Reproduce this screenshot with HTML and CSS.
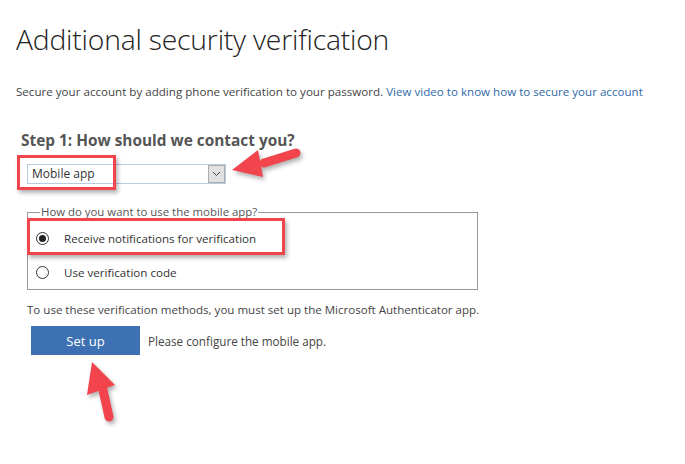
FILE: index.html
```html
<!DOCTYPE html>
<html lang="en">
<head>
    <meta charset="UTF-8">
    <meta name="viewport" content="width=device-width, initial-scale=1.0">
    <title>Additional security verification</title>
    <link rel="stylesheet" href="styles.css">
</head>
<body>
    <div class="page">
        <h1>Additional security verification</h1>
        <p class="intro">Secure your account by adding phone verification to your password. <a href="#">View video to know how to secure your account</a></p>

        <div class="step">
            <h2>Step 1: How should we contact you?</h2>
            <div class="select">
                <span class="select-value">Mobile app</span>
                <span class="select-btn">
                    <svg width="9" height="6" viewBox="0 0 9 6"><path d="M1 1 L4.5 4.5 L8 1" fill="none" stroke="#444" stroke-width="1"/></svg>
                </span>
            </div>

            <fieldset class="options">
                <legend>How do you want to use the mobile app?</legend>
                <label class="option">
                    <span class="radio checked"></span>
                    Receive notifications for verification
                </label>
                <label class="option">
                    <span class="radio"></span>
                    Use verification code
                </label>
            </fieldset>

            <p class="note">To use these verification methods, you must set up the Microsoft Authenticator app.</p>
            <div class="setup-row">
                <button class="btn">Set up</button>
                <span>Please configure the mobile app.</span>
            </div>
        </div>

        <!-- annotations -->
        <div class="mark mark-select"></div>
        <div class="mark mark-option"></div>
        <svg class="arrow arrow-select" width="90" height="50" viewBox="0 0 90 50">
            <path d="M66 11 L34 21" stroke="#f2444d" stroke-width="9" stroke-linecap="round" fill="none"/>
            <path d="M2 28 L28 8 L33 35 Z" fill="#f2444d"/>
        </svg>
        <svg class="arrow arrow-setup" width="50" height="80" viewBox="0 0 50 80">
            <path d="M23 30 L29 57" stroke="#f2444d" stroke-width="9" stroke-linecap="round" fill="none"/>
            <path d="M12 2 L7 35 L35 25 Z" fill="#f2444d"/>
        </svg>
    </div>
</body>
</html>
```

FILE: styles.css
```css
* {
    margin: 0;
    padding: 0;
    box-sizing: border-box;
}

body {
    font-family: 'Open Sans', 'Noto Sans', sans-serif;
    background: #fff;
    color: #444;
}

.page {
    position: relative;
    width: 685px;
    height: 464px;
    padding: 20px 0 0 16px;
}

h1 {
    font-size: 28.3px;
    font-weight: 300;
    color: #222;
    letter-spacing: -0.2px;
    line-height: 38px;
}

.intro {
    margin-top: 25px;
    font-size: 11.6px;
    line-height: 18px;
    color: #444;
}

.intro a {
    color: #2f6aa8;
    text-decoration: none;
}

.step {
    margin-top: 30px;
    padding-left: 11px;
}

h2 {
    margin-left: -6px;
    font-size: 15.4px;
    font-weight: 700;
    color: #555;
    line-height: 20px;
}

.select {
    display: flex;
    align-items: stretch;
    margin-top: 13px;
    width: 199px;
    height: 20px;
    border: 1px solid #b5cde3;
}

.select-value {
    flex: 1;
    padding-left: 4px;
    font-size: 12px;
    line-height: 18px;
    color: #333;
}

.select-btn {
    display: flex;
    align-items: center;
    justify-content: center;
    width: 17px;
    background: #e1e1e1;
    border: 1px solid #adadad;
}

.options {
    margin-top: 21px;
    width: 451px;
    height: 85px;
    border: 1px solid #999;
    padding: 2px 0 0 8px;
}

.options legend {
    margin-left: 4px;
    padding: 0 1px;
    font-size: 11.4px;
    color: #555;
    line-height: 14px;
}

.option {
    display: flex;
    align-items: center;
    gap: 15px;
    font-size: 11.6px;
    color: #333;
    height: 34px;
}

.radio {
    width: 13px;
    height: 13px;
    border: 1px solid #333;
    border-radius: 50%;
    display: flex;
    align-items: center;
    justify-content: center;
}

.radio.checked::after {
    content: '';
    width: 7px;
    height: 7px;
    border-radius: 50%;
    background: #222;
}

.note {
    margin-top: 11px;
    font-size: 11.55px;
    color: #444;
    line-height: 18px;
}

.setup-row {
    display: flex;
    align-items: center;
    gap: 8px;
    margin-top: 7px;
    padding-left: 4px;
    font-size: 11.7px;
    color: #444;
}

.btn {
    width: 109px;
    height: 29px;
    background: #3d71b4;
    color: #fff;
    border: none;
    font-family: inherit;
    font-size: 13px;
}

/* red highlight boxes and arrows drawn over the form */
.mark {
    position: absolute;
    border: 3px solid #f2444d;
    box-shadow: 2px 3px 4px rgba(0, 0, 0, 0.3);
}

.mark-select {
    left: 17px;
    top: 155px;
    width: 99px;
    height: 35px;
}

.mark-option {
    left: 27px;
    top: 218px;
    width: 258px;
    height: 37px;
}

.arrow {
    position: absolute;
    filter: drop-shadow(2px 3px 2px rgba(0, 0, 0, 0.3));
}

.arrow-select {
    left: 230px;
    top: 142px;
}

.arrow-setup {
    left: 80px;
    top: 360px;
}
```
